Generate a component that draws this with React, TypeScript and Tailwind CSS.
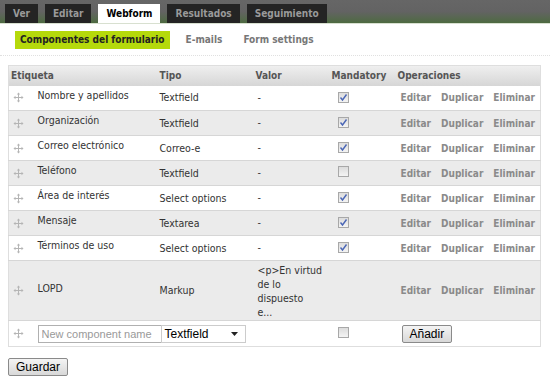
import React from 'react';

const rows = [
  { label: 'Nombre y apellidos', type: 'Textfield', checked: true },
  { label: 'Organización', type: 'Textfield', checked: true },
  { label: 'Correo electrónico', type: 'Correo-e', checked: true },
  { label: 'Teléfono', type: 'Textfield', checked: false },
  { label: 'Área de interés', type: 'Select options', checked: true },
  { label: 'Mensaje', type: 'Textarea', checked: true },
  { label: 'Términos de uso', type: 'Select options', checked: true },
];

const DragIcon: React.FC = () => (
  <svg width="11" height="11" viewBox="0 0 11 11" className="block">
    <path d="M5.5 0.5 L3.8 2.5 H5 V5 H2.5 V3.8 L0.5 5.5 L2.5 7.2 V6 H5 V8.5 H3.8 L5.5 10.5 L7.2 8.5 H6 V6 H8.5 V7.2 L10.5 5.5 L8.5 3.8 V5 H6 V2.5 H7.2 Z" fill="#b5b5b5" />
  </svg>
);

const Check: React.FC<{ checked: boolean }> = ({ checked }) => (
  <span className="inline-flex w-[11px] h-[11px] border border-[#a8a8a8] bg-gradient-to-b from-[#dcdcdc] to-[#f4f4f4] items-center justify-center">
    {checked && (
      <svg width="9" height="9" viewBox="0 0 9 9">
        <path d="M1.5 4.5 L3.5 7 L7.5 1.5" stroke="#4a66b5" strokeWidth="1.4" fill="none" />
      </svg>
    )}
  </span>
);

const Ops: React.FC = () => (
  <td className="pl-[5px] font-bold text-[10px] text-[#8a8a8a] whitespace-nowrap">
    <span>Editar</span>
    <span className="ml-[10px]">Duplicar</span>
    <span className="ml-[10px]">Eliminar</span>
  </td>
);

const tabs = ['Ver', 'Editar', 'Webform', 'Resultados', 'Seguimiento'];

const App: React.FC = () => {
  return (
    <div className="w-[550px] h-[383px] bg-white overflow-hidden text-[10.5px] font-['DejaVu_Sans_Condensed','DejaVu_Sans',Verdana,sans-serif]">
      {/* Primary tabs */}
      <div className="h-[24px] bg-gradient-to-b from-[#666666] via-[#636363] to-[#4d6a40] flex items-end pl-[5px] gap-[7px] border-b border-[#d8e0d0]">
        {tabs.map((t) => (
          <div
            key={t}
            className={
              t === 'Webform'
                ? 'h-[19px] px-[8px] bg-white text-black font-bold text-[10px] flex items-center'
                : 'h-[19px] px-[8px] bg-[#242424] text-[#9a9a9a] font-bold text-[10px] flex items-center'
            }
          >
            {t}
          </div>
        ))}
      </div>

      {/* Secondary tabs */}
      <div className="h-[32px] flex items-center pl-[15px] border-b border-dotted border-[#e0e0e0] text-[10px]">
        <div className="h-[18px] px-[5px] bg-[#b5d90b] text-[#222] font-bold flex items-center">
          Componentes del formulario
        </div>
        <div className="ml-[16px] text-[#777] font-bold">E-mails</div>
        <div className="ml-[21px] text-[#777] font-bold">Form settings</div>
      </div>

      {/* Table */}
      <div className="px-[8px] pt-[9px]">
        <table className="w-[533px] border-collapse border border-[#dedede] table-fixed">
          <colgroup>
            <col className="w-[27px]" />
            <col className="w-[122px]" />
            <col className="w-[96px]" />
            <col className="w-[76px]" />
            <col className="w-[66px]" />
            <col />
          </colgroup>
          <thead>
            <tr className="h-[20px] bg-gradient-to-b from-[#efefef] to-[#d6d6d6] text-[#555] text-[10px] font-bold text-left">
              <th colSpan={2} className="pl-[2px] font-bold">Etiqueta</th>
              <th className="pl-[2px] font-bold">Tipo</th>
              <th className="pl-[2px] font-bold">Valor</th>
              <th className="pl-[2px] font-bold">Mandatory</th>
              <th className="pl-[2px] font-bold">Operaciones</th>
            </tr>
          </thead>
          <tbody className="text-[#333]">
            {rows.map((r, i) => (
              <tr key={r.label} className={`h-[25px] border-b border-[#d6d6d6] ${i % 2 ? 'bg-[#ebebeb]' : 'bg-white'}`}>
                <td className="pl-[4px]"><DragIcon /></td>
                <td className="pl-[2px] pb-[4px]">{r.label}</td>
                <td className="pl-[2px] pt-[1px]">{r.type}</td>
                <td className="pl-[4px]">-</td>
                <td className="pl-[8px] pt-[2px]"><Check checked={r.checked} /></td>
                <Ops />
              </tr>
            ))}
            <tr className="h-[60px] border-b border-[#d6d6d6] bg-[#ebebeb]">
              <td className="pl-[4px]"><DragIcon /></td>
              <td className="pl-[2px] pb-[4px]">LOPD</td>
              <td className="pl-[2px] pt-[1px]">Markup</td>
              <td className="pl-[4px] leading-[14px]">
                &lt;p&gt;En virtud<br />de lo<br />dispuesto<br />e...
              </td>
              <td></td>
              <Ops />
            </tr>
            <tr className="h-[26px] bg-white">
              <td className="pl-[4px]"><DragIcon /></td>
              <td colSpan={2} className="pl-[2px]">
                <div className="flex items-center">
                  <input
                    placeholder="New component name"
                    className="w-[124px] h-[18px] border border-[#b0b0b0] px-[3px] text-[11px] font-['Liberation_Sans',Arial,sans-serif] placeholder:text-[#999] bg-white"
                  />
                  <div className="w-[85px] h-[18px] border border-[#ccc] -ml-[1px] flex items-center justify-between pl-[3px] pr-[7px] font-['Liberation_Sans',Arial,sans-serif] text-[12px] text-black bg-white">
                    <span>Textfield</span>
                    <svg width="7" height="4" viewBox="0 0 7 4"><path d="M0 0 H7 L3.5 4 Z" fill="#222" /></svg>
                  </div>
                </div>
              </td>
              <td></td>
              <td className="pl-[8px] pt-[2px]"><Check checked={false} /></td>
              <td className="pl-[6px]">
                <button className="h-[18px] px-[7px] border border-[#8a8a8a] rounded-[2px] bg-gradient-to-b from-[#f4f4f4] to-[#d8d8d8] text-[12px] text-black font-['Liberation_Sans',Arial,sans-serif] leading-none">
                  Añadir
                </button>
              </td>
            </tr>
          </tbody>
        </table>
        <button className="mt-[11px] h-[18px] px-[7px] border border-[#8a8a8a] rounded-[2px] bg-gradient-to-b from-[#f4f4f4] to-[#d8d8d8] text-[12px] text-black font-['Liberation_Sans',Arial,sans-serif] leading-none">
          Guardar
        </button>
      </div>
    </div>
  );
};

export default App;
